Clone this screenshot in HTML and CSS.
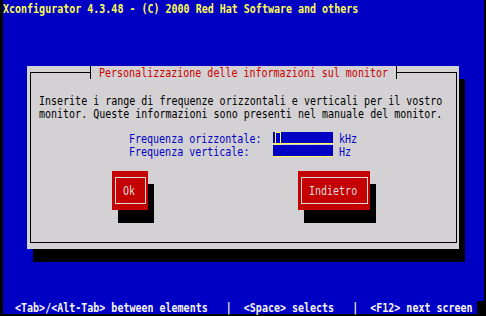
FILE: index.html
```html
<!DOCTYPE html>
<html lang="it">
<head>
<meta charset="utf-8">
<title>Xconfigurator</title>
<link rel="stylesheet" href="styles.css">
</head>
<body>
<div class="screen">
  <header class="titlebar"><span class="t">Xconfigurator 4.3.48 - (C) 2000 Red Hat Software and others</span></header>
  <main class="desk">
    <section class="dialog">
      <fieldset class="frame">
        <legend class="caption"><span class="t">Personalizzazione delle informazioni sul monitor</span></legend>
        <p class="intro">
          <span class="t">Inserite i range di frequenze orizzontali e verticali per il vostro</span>
          <span class="t">monitor. Queste informazioni sono presenti nel manuale del monitor.</span>
        </p>
        <div class="fields">
          <span class="label t">Frequenza orizzontale:</span>
          <span class="entry"><span class="cursor"></span></span>
          <span class="unit t">kHz</span>
          <span class="label t">Frequenza verticale:</span>
          <span class="entry"></span>
          <span class="unit t">Hz</span>
        </div>
        <div class="actions">
          <button class="btn btn-ok" type="button"><span class="btn-face"><span class="t">Ok</span></span></button>
          <button class="btn btn-back" type="button"><span class="btn-face"><span class="t">Indietro</span></span></button>
        </div>
      </fieldset>
    </section>
  </main>
  <footer class="status"><span class="status-text"><span class="t">  &lt;Tab&gt;/&lt;Alt-Tab&gt; between elements   |  &lt;Space&gt; selects   |  &lt;F12&gt; next screen</span></span></footer>
</div>
</body>
</html>
```
FILE: styles.css
```css
html, body {
  margin: 0;
  background: #000;
}
body {
  width: 486px;
  height: 316px;
  overflow: hidden;
  font-family: "DejaVu Sans Mono", "Liberation Mono", monospace;
  font-size: 10px;
  line-height: 13px;
}
/* text-mode glyphs: 6px cells, stretched to the tall VGA look */
.t {
  display: inline-block;
  white-space: pre;
  line-height: 13px;
  transform: scaleY(1.2);
  transform-origin: 0 6.45px;
}
.screen {
  margin-left: 3px;
  width: 481px;
  height: 314px;
  background: #0000c4;
  display: flex;
  flex-direction: column;
}
.titlebar {
  height: 15px;
  box-sizing: border-box;
  padding-top: 2px;
  color: #fcfc54;
  font-weight: bold;
}
.desk {
  flex: 1;
  padding: 51px 0 0 24px;
}
.dialog {
  width: 432px;
  height: 183px;
  box-sizing: border-box;
  padding: 0 2px 6px 3px;
  background: #d3d1d3;
  box-shadow: 6px 13px 0 #000;
}
.frame {
  margin: 0;
  padding: 0;
  min-width: 0;
  height: 177px;
  box-sizing: border-box;
  border: 1px solid #000;
}
.caption {
  margin-left: 59px;
  padding: 0 8px;
  height: 13px;
  line-height: 13px;
  border-left: 1px solid #000;
  border-right: 1px solid #000;
  color: #c80000;
}
.caption .t {
  vertical-align: top;
}
.intro {
  margin: 15px 0 0 8px;
  color: #000;
}
.intro .t {
  display: block;
}
.fields {
  display: grid;
  grid-template-columns: 144px 60px 60px;
  grid-auto-rows: 13px;
  margin: 12px 0 0 98px;
  color: #0000c4;
}
.entry {
  position: relative;
  height: 12px;
  box-sizing: border-box;
  background: #0000c4;
  border-bottom: 1px solid #fcfc54;
}
.cursor {
  position: absolute;
  left: 2px;
  top: 0;
  width: 6px;
  height: 13px;
  box-sizing: border-box;
  border: 1px solid #fcfc54;
}
.unit {
  margin-left: 6px;
}
.actions {
  display: flex;
  gap: 150px;
  margin: 13px 0 0 81px;
}
.btn {
  appearance: none;
  display: block;
  margin: 0;
  height: 39px;
  box-sizing: border-box;
  padding: 6px 2px 6px 3px;
  border: 0;
  border-radius: 0;
  background: #c40000;
  box-shadow: 6px 13px 0 #000;
  font: inherit;
  color: #dcdcdc;
}
.btn-ok {
  width: 36px;
}
.btn-back {
  width: 72px;
}
.btn-face {
  display: block;
  height: 27px;
  box-sizing: border-box;
  border: 1px solid #dcdcdc;
  padding-left: 7px;
  line-height: 25px;
  text-align: left;
}
.status {
  height: 13px;
  display: flex;
  background: #000;
  color: #f4f4f4;
  font-weight: bold;
}
.status-text {
  width: 474px;
  background: #0000c4;
}
```
